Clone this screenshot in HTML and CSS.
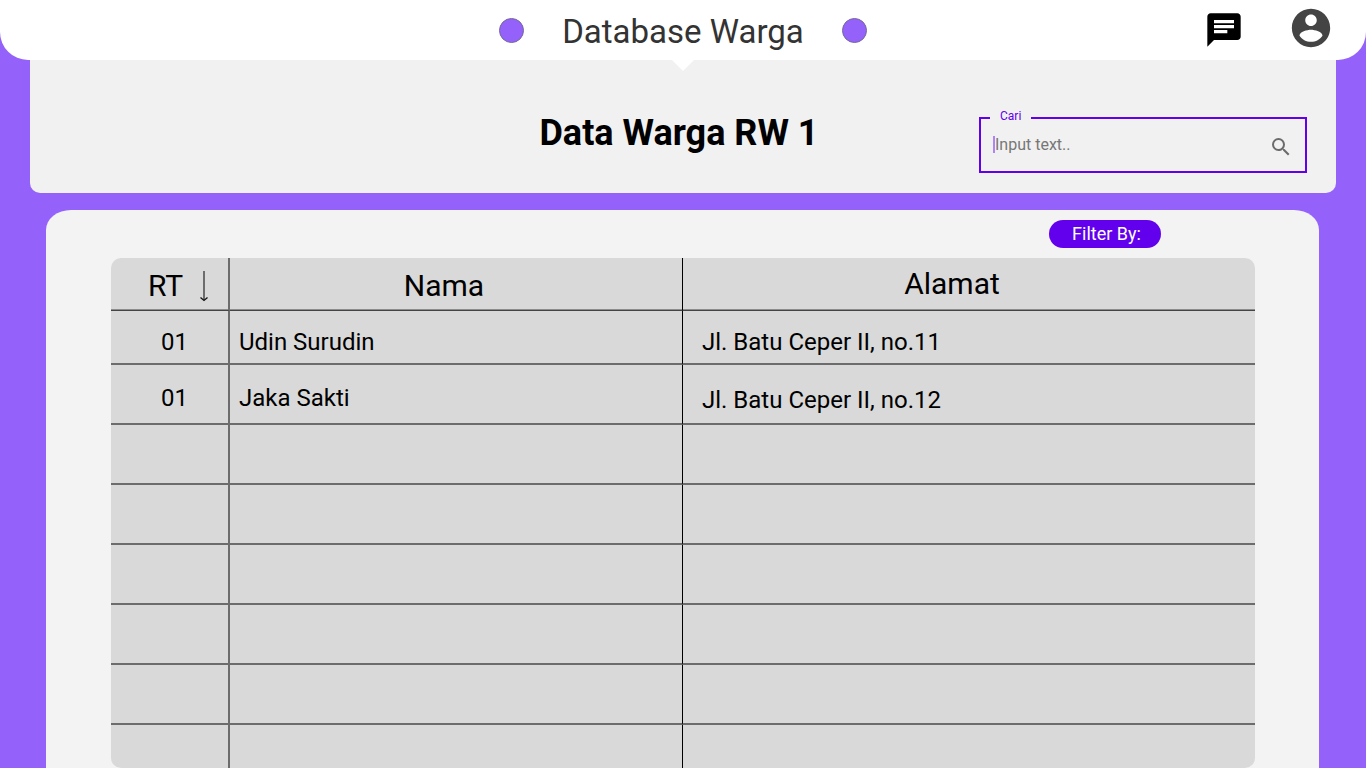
FILE: index.html
```html
<!DOCTYPE html>
<html lang="id">
<head>
<meta charset="utf-8">
<meta name="viewport" content="width=device-width, initial-scale=1">
<title>Database Warga</title>
<link rel="stylesheet" href="styles.css">
</head>
<body>
<header class="topbar">
  <div class="brand">
    <span class="dot"></span>
    <span class="brand-name">Database Warga</span>
    <span class="dot"></span>
  </div>
  <div class="actions">
    <button class="icon-button chat" type="button" aria-label="Pesan">
      <svg width="40" height="40" viewBox="0 0 24 24"><path fill="#000" d="M20 2H4C2.900 2 2 2.900 2 4v18l4-4h14c1.100 0 2-.9 2-2V4c0-1.100-.9-2-2-2zM6 6h12v2H6V6zm8 8H6v-2h8v2zm4-3H6V9h12v2z"/></svg>
    </button>
    <button class="icon-button" type="button" aria-label="Akun">
      <svg width="46" height="46" viewBox="0 0 24 24"><path fill="#444" d="M12 2C6.480 2 2 6.480 2 12s4.480 10 10 10 10-4.480 10-10S17.520 2 12 2zm0 3c1.660 0 3 1.340 3 3s-1.340 3-3 3-3-1.340-3-3 1.340-3 3-3zm0 14.200c-2.500 0-4.710-1.280-6-3.220.03-1.990 4-3.080 6-3.080 1.990 0 5.970 1.090 6 3.080-1.290 1.940-3.500 3.220-6 3.220z"/></svg>
    </button>
  </div>
</header>
<section class="heading">
  <h1 class="title">Data Warga RW 1</h1>
  <fieldset class="search">
    <legend class="search-legend"><label for="cari">Cari</label></legend>
    <input class="search-input" id="cari" type="text" placeholder="Input text..">
    <svg class="search-icon" width="24" height="24" viewBox="0 0 24 24"><path fill="#6b6b6b" d="M15.500 14h-.79l-.28-.27A6.471 6.471 0 0 0 16 9.500 6.500 6.500 0 1 0 9.500 16c1.610 0 3.090-.59 4.230-1.570l.27.28v.79l5 4.990L20.490 19l-4.990-5zm-6 0C7.010 14 5 11.990 5 9.500S7.010 5 9.500 5 14 7.010 14 9.500 11.990 14 9.500 14z"/></svg>
  </fieldset>
</section>
<main class="sheet">
  <div class="toolbar"><button class="filter" type="button">Filter By:</button></div>
  <table class="residents">
    <colgroup><col class="col-rt"><col class="col-name"><col></colgroup>
    <thead>
      <tr>
        <th scope="col"><span class="sort-head">RT
          <button class="icon-button" type="button" aria-label="Urutkan RT"><svg width="10" height="32" viewBox="0 0 10 32"><path d="M5 1v29" stroke="#6c6c6c" stroke-width="2"/><path d="M1.500 27.500 5 30.500 8.500 27.500" fill="none" stroke="#111" stroke-width="1.300"/></svg></button></span></th>
        <th scope="col" class="head-name">Nama</th>
        <th scope="col" class="head-address">Alamat</th>
      </tr>
    </thead>
    <tbody>
      <tr class="first"><td>01</td><td>Udin Surudin</td><td>Jl. Batu Ceper II, no.11</td></tr>
      <tr><td>01</td><td>Jaka Sakti</td><td>Jl. Batu Ceper II, no.12</td></tr>
      <tr><td></td><td></td><td></td></tr>
      <tr><td></td><td></td><td></td></tr>
      <tr><td></td><td></td><td></td></tr>
      <tr><td></td><td></td><td></td></tr>
      <tr><td></td><td></td><td></td></tr>
      <tr class="last"><td></td><td></td><td></td></tr>
    </tbody>
  </table>
</main>
</body>
</html>
```
FILE: styles.css
```css
* { box-sizing: border-box; }

body {
  margin: 0;
  background: #9461fb;
  color: #000;
  font-family: Roboto, "Liberation Sans", sans-serif;
}

button { font: inherit; cursor: pointer; }

.icon-button {
  display: flex;
  padding: 0;
  border: 0;
  background: none;
}

.topbar {
  position: relative;
  display: grid;
  grid-template-columns: 1fr auto 1fr;
  align-items: center;
  height: 60px;
  padding: 0 32px;
  background: #fff;
  border-radius: 0 0 28px 28px;
}

.topbar::after {
  content: "";
  position: absolute;
  top: 100%;
  left: 50%;
  margin-left: -11px;
  border: 11px solid transparent;
  border-top-color: #fff;
  border-bottom: 0;
}

.brand {
  grid-column: 2;
  display: flex;
  align-items: center;
  gap: 38px;
}

.brand-name {
  padding-top: 4px;
  color: #333;
  font-size: 33px;
  line-height: 40px;
}

.dot {
  width: 25px;
  height: 25px;
  border: 1px solid #75689a;
  border-radius: 50%;
  background: #9461fb;
}

.actions {
  display: flex;
  justify-content: flex-end;
  align-items: center;
  gap: 44px;
  padding-bottom: 4px;
}

.chat { padding-top: 4px; }

.heading {
  display: grid;
  grid-template-columns: 1fr auto 1fr;
  align-items: start;
  height: 133px;
  margin: 0 30px;
  padding: 48px 29px 0;
  background: #f1f1f1;
  border-radius: 0 0 10px 10px;
}

.title {
  grid-column: 2;
  margin: 0;
  padding-right: 8px;
  font-size: 36px;
  font-weight: 700;
  line-height: 50px;
}

.search {
  display: flex;
  align-items: center;
  justify-self: end;
  width: 328px;
  height: 64px;
  margin: 1px 0 0;
  padding: 0 12px 9px;
  border: 2px solid #6200ee;
}

.search-legend {
  margin-left: -3px;
  padding: 0 10px 4px;
  color: #6200ee;
  font-size: 12px;
  line-height: 14px;
}

.search-input {
  flex: 1;
  min-width: 0;
  height: 17px;
  padding: 0;
  border: 0;
  border-left: 2px solid #b084f5;
  outline: 0;
  background: none;
  color: #333;
  font: 16px/17px Roboto, sans-serif;
}

.search-input::placeholder { color: #777; opacity: 1; }

.search-icon { margin-top: 5px; }

.sheet {
  margin: 17px 47px 0 46px;
  padding: 10px 64px 0 65px;
  background: #f3f3f3;
  border-radius: 25px 25px 0 0 / 20px 20px 0 0;
}

.toolbar {
  display: flex;
  justify-content: flex-end;
  padding: 0 94px 10px 0;
}

.filter {
  width: 112px;
  height: 28px;
  padding: 0 0 0 3px;
  border: 0;
  border-radius: 14px;
  background: #6200ee;
  color: #fff;
  font-size: 18px;
  line-height: 28px;
}

.residents {
  width: 100%;
  table-layout: fixed;
  border-spacing: 0;
  border-radius: 10px;
  background: #d9d9d9;
  font-size: 24px;
  line-height: 28px;
}

.col-rt { width: 10.4%; }
.col-name { width: 39.6%; }

.residents th {
  height: 53px;
  padding: 4px 0 1px;
  border-bottom: 1px solid #444;
  box-shadow: inset 0 -1px #8c8c8c;
  font-size: 30px;
  font-weight: 400;
}

.residents .head-name { padding-right: 24px; }
.residents .head-address { padding: 0 34px 1px 0; }

.residents td {
  height: 60px;
  padding: 8px 9px 0;
  border-bottom: 2px solid #6c6c6c;
}

.residents th:first-child,
.residents td:first-child { border-right: 2px solid #6c6c6c; }

.residents th:nth-child(2),
.residents td:nth-child(2) { border-right: 1px solid #000; }

.residents td:first-child { padding-left: 19px; text-align: center; }
.residents td:last-child { padding: 12px 0 0 19px; }
.residents .first td { height: 54px; padding-top: 10px; }
.residents .last td { height: 43px; border-bottom: 0; }

.sort-head {
  display: flex;
  align-items: center;
  justify-content: center;
  gap: 16px;
  padding-left: 18px;
}
```
